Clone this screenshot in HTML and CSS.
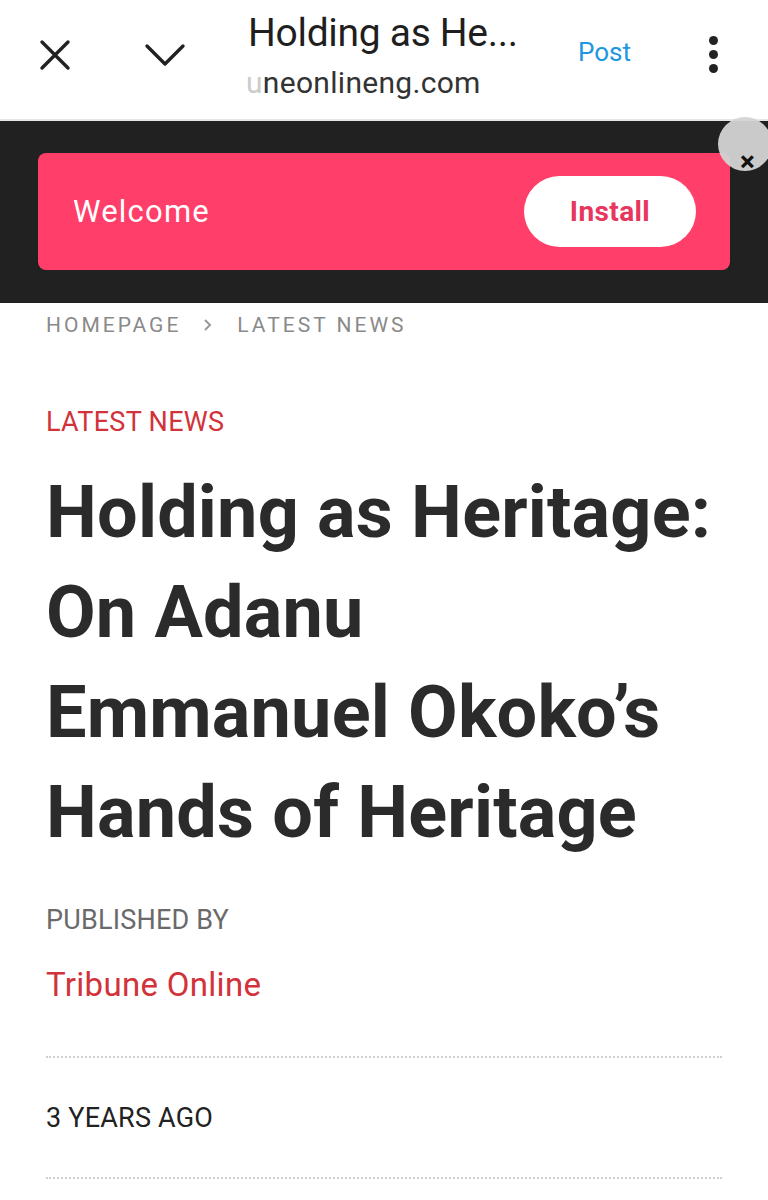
FILE: index.html
```html
<!DOCTYPE html>
<html>
<head>
<meta charset="utf-8">
<link rel="stylesheet" href="styles.css">
</head>
<body>
<header class="topbar">
  <div class="icon-btn close">
    <svg width="34" height="34" viewBox="0 0 34 34"><path d="M4 4 L30 30 M30 4 L4 30" stroke="#222" stroke-width="3.4" stroke-linecap="round" fill="none"/></svg>
  </div>
  <div class="icon-btn chevron">
    <svg width="42" height="24" viewBox="0 0 42 24"><path d="M3 3 L21 21 L39 3" stroke="#222" stroke-width="3.4" stroke-linecap="round" stroke-linejoin="round" fill="none"/></svg>
  </div>
  <div class="titles">
    <div class="page-title">Holding as He...</div>
    <div class="page-url"><span class="fade">u</span>neonlineng.com</div>
  </div>
  <div class="post">Post</div>
  <div class="dots"><span></span><span></span><span></span></div>
</header>

<section class="banner">
  <div class="banner-card">
    <span class="welcome">Welcome</span>
    <span class="install">Install</span>
  </div>
  <div class="banner-close"><span>×</span></div>
</section>

<main class="article">
  <nav class="crumbs">
    <span>HOMEPAGE</span>
    <svg class="crumb-sep" width="10" height="14" viewBox="0 0 10 14"><path d="M2 2 L7 7 L2 12" stroke="#999" stroke-width="2" fill="none"/></svg>
    <span>LATEST NEWS</span>
  </nav>
  <div class="category">LATEST NEWS</div>
  <h1 class="headline"><span class="hl">Holding as Heritage:</span> <span class="hl">On Adanu</span> <span class="hl">Emmanuel Okoko’s</span> <span class="hl">Hands of Heritage</span></h1>
  <div class="pub-label">PUBLISHED BY</div>
  <div class="publisher">Tribune Online</div>
  <div class="meta-row">3 YEARS AGO</div>
</main>
</body>
</html>
```
FILE: styles.css
```css
* { box-sizing: border-box; }
html, body { margin: 0; padding: 0; background: #fff; }
body { font-family: Roboto, "Liberation Sans", Arial, sans-serif; width: 768px; overflow: hidden; }

.topbar {
  height: 121px;
  display: flex;
  align-items: center;
  border-bottom: 2px solid #e6e6e6;
  position: relative;
}
.icon-btn { display: flex; align-items: center; justify-content: center; }
.close { width: 34px; margin-left: 38px; margin-top: -10px; }
.chevron { width: 42px; margin-left: 72px; margin-top: -10px; }
.titles { margin-left: 62px; width: 320px; margin-top: -8px; }
.page-title { font-size: 39px; color: #1f1f1f; line-height: 44px; letter-spacing: -0.3px; white-space: nowrap; }
.page-url { font-size: 30px; color: #333; line-height: 36px; margin-top: 10px; margin-left: -2px; letter-spacing: 0.3px; }
.fade { color: #ccc; }
.post { font-size: 26px; color: #2196e0; margin-left: 10px; margin-top: -16px; }
.dots { display: flex; flex-direction: column; gap: 5px; margin-left: 78px; margin-top: -10px; }
.dots span { width: 9px; height: 9px; border-radius: 50%; background: #222; display: block; }

.banner {
  background: #212121;
  height: 182px;
  padding: 32px 38px 0 38px;
  position: relative;
}
.banner-card {
  height: 117px;
  background: #ff3e69;
  border-radius: 8px;
  display: flex;
  align-items: center;
  justify-content: space-between;
  padding: 0 34px 0 35px;
}
.welcome { color: #fff; font-size: 31px; letter-spacing: 1.2px; }
.install {
  background: #fff;
  color: #e8365e;
  font-weight: 700;
  font-size: 28px;
  letter-spacing: 0.4px;
  width: 172px;
  height: 71px;
  border-radius: 36px;
  display: flex;
  align-items: center;
  justify-content: center;
}
.banner-close {
  position: absolute;
  right: -4px;
  top: -4px;
  width: 54px;
  height: 54px;
  border-radius: 50%;
  background: rgba(212,212,212,0.95);
}
.banner-close span {
  position: absolute;
  left: 22px;
  top: 31px;
  font-size: 28px;
  line-height: 28px;
  font-weight: 700;
  color: #111;
}

.article { padding: 0 46px; }
.crumbs {
  display: flex;
  align-items: center;
  height: 44px;
  font-size: 21px;
  letter-spacing: 3px;
  color: #8a8a8a;
}
.crumb-sep { margin: 0 24px 0 22px; }
.category {
  color: #d2333a;
  font-size: 27px;
  margin-top: 60px;
  line-height: 30px;
  letter-spacing: 0.3px;
}
.headline {
  margin: 26px 0 0 0;
  font-size: 72px;
  font-weight: 700;
  line-height: 100px;
  color: #2b2b2b;
  letter-spacing: 0.2px;
}
.hl { display: block; white-space: nowrap; }
.pub-label { margin-top: 42px; font-size: 27px; color: #6a6a6a; line-height: 30px; letter-spacing: 0.2px; }
.publisher { margin-top: 32px; font-size: 33px; color: #d2333a; line-height: 36px; letter-spacing: 0.3px; }
.meta-row {
  margin-top: 53px;
  border-top: 2px dotted #cfcfcf;
  border-bottom: 2px dotted #cfcfcf;
  height: 123px;
  display: flex;
  align-items: center;
  font-size: 27px;
  color: #222;
  width: 676px;
  letter-spacing: 0.2px;
}
```
